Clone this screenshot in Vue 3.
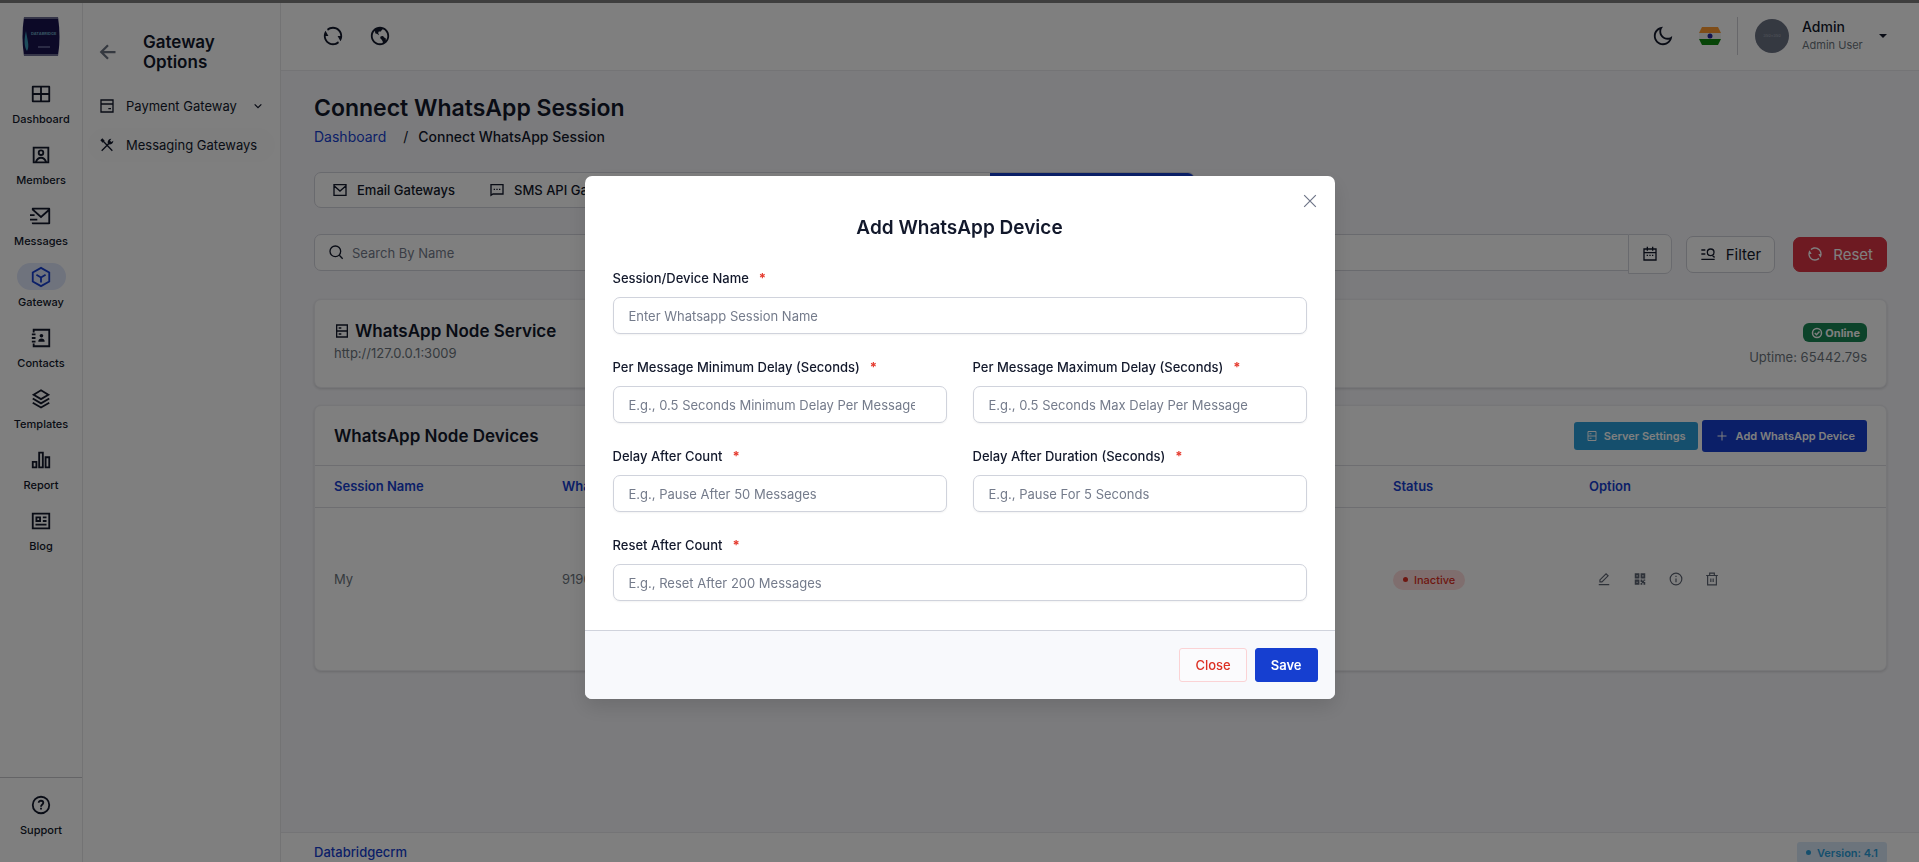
<template>
    <div class="app">
        <!-- Shared icon shapes -->
        <svg class="sprite" aria-hidden="true">
            <symbol id="i-grid" viewBox="0 0 24 24"><path d="M21 3C21.6 3 22 3.4 22 4V20C22 20.6 21.6 21 21 21H3C2.4 21 2 20.6 2 20V4C2 3.4 2.4 3 3 3H21ZM11 13H4V19H11V13ZM20 13H13V19H20V13ZM11 5H4V11H11V5ZM20 5H13V11H20V5Z" /></symbol>
            <symbol id="i-user-box" viewBox="0 0 24 24"><path class="line" d="M4 4H20V20H4ZM6.5 19.500C7.500 16.500 9.500 15 12 15S16.500 16.500 17.500 19.500" /><circle class="line" cx="12" cy="9.500" r="2.500" /></symbol>
            <symbol id="i-mail-send" viewBox="0 0 24 24"><path d="M22 20C22 20.600 21.500 21 21 21H3C2.400 21 2 20.600 2 20V19H20V7.300L12 14.500L2 5.500V4C2 3.400 2.500 3 3 3H21C21.600 3 22 3.400 22 4V20ZM4.400 5L12 11.800L19.600 5H4.400ZM0 15H8V17H0V15ZM0 10H5V12H0V10Z" /></symbol>
            <symbol id="i-box" viewBox="0 0 24 24"><path class="line" d="M12 2L21 7V17L12 22L3 17V7ZM7 9.500L12 12.500L17 9.500M12 12.500V18" /></symbol>
            <symbol id="i-contacts" viewBox="0 0 24 24"><path class="line" d="M4 6V3H21V21H4V18M2 8H6M2 12H6M2 16H6" /><circle cx="12.500" cy="9.500" r="2" /><path d="M9 16C9 13.500 10.500 12.500 12.500 12.500S16 13.500 16 16Z" /></symbol>
            <symbol id="i-stack" viewBox="0 0 24 24"><path class="line" d="M12 2.500L20 7.300L12 12.100L4 7.300ZM3 11.500L12 16.800L21 11.500M3 16L12 21.300L21 16" /></symbol>
            <symbol id="i-chart" viewBox="0 0 24 24"><path d="M2 13H8V21H2V13ZM4 15V19H6V15H4ZM9 3H15V21H9V3ZM11 5V19H13V5H11ZM16 8H22V21H16V8ZM18 10V19H20V10H18Z" /></symbol>
            <symbol id="i-article" viewBox="0 0 24 24"><path class="line" d="M3 4H21V20H3ZM7 8H11V12H7ZM14 8H18M14 12H18M6 16H18" /></symbol>
            <symbol id="i-question" viewBox="0 0 24 24"><circle class="line" cx="12" cy="12" r="9" /><path class="line" d="M9.500 9.500C9.500 6.500 14.500 6.800 14.500 9.600C14.500 11.500 12 11.500 12 14" /><path d="M11 15H13V17H11Z" /></symbol>
            <symbol id="i-refresh" viewBox="0 0 24 24"><path d="M5.46 4.43C7.22 2.92 9.5 2 12 2C17.52 2 22 6.48 22 12C22 14.14 21.33 16.12 20.19 17.74L17 12H20C20 7.58 16.42 4 12 4C9.85 4 7.9 4.85 6.46 6.23L5.46 4.43ZM18.54 19.57C16.78 21.08 14.5 22 12 22C6.48 22 2 17.52 2 12C2 9.88 2.67 7.88 3.81 6.26L7 12H4C4 16.42 7.58 20 12 20C14.15 20 16.1 19.15 17.54 17.77L18.54 19.57Z" /></symbol>
            <symbol id="i-earth" viewBox="0 0 24 24"><path d="M6.24 6.45C4.85 7.89 4 9.85 4 12C4 16.42 7.58 20 12 20C13.08 20 14.11 19.79 15.05 19.4C15.17 18.65 14.91 17.93 14.81 17.67C14.58 17.12 13.82 16.16 12.56 14.83C12.22 14.48 12.24 14.2 12.36 13.39C12.46 12.75 12.6 12.42 14.46 12.12C15.41 11.97 15.66 12.35 16 12.88L16.12 13.05C16.45 13.53 16.69 13.64 17.06 13.81C17.22 13.88 17.43 13.98 17.7 14.13C18.36 14.5 18.36 14.92 18.36 15.85C18.36 16.34 18.32 16.69 18.26 16.99C19.35 15.62 20 13.89 20 12C20 8.7 18 5.87 15.15 4.64C14.6 5.02 13.84 5.55 13.58 5.91C13.44 6.1 13.25 7.04 12.63 7.12C12.46 7.14 12.24 7.13 12.01 7.11C11.39 7.07 10.54 7.02 10.27 7.75C10.1 8.22 10.06 9.49 10.62 10.15C10.71 10.26 10.73 10.45 10.67 10.67C10.59 10.96 10.43 11.14 10.38 11.17C10.28 11.12 10.09 10.89 9.96 10.74C9.65 10.38 9.25 9.92 8.75 9.78C8.56 9.73 8.36 9.69 8.17 9.65C7.62 9.53 6.99 9.4 6.85 9.09C6.74 8.87 6.74 8.56 6.75 8.23C6.75 7.81 6.75 7.34 6.54 6.88C6.46 6.71 6.36 6.56 6.24 6.45ZM12 22C6.48 22 2 17.52 2 12C2 6.48 6.48 2 12 2C17.52 2 22 6.48 22 12C22 17.52 17.52 22 12 22Z" /></symbol>
            <symbol id="i-moon" viewBox="0 0 24 24"><path d="M10 7C10 10.87 13.13 14 17 14C18.96 14 20.73 13.2 22 11.9V12C22 17.52 17.52 22 12 22C6.48 22 2 17.52 2 12C2 6.48 6.48 2 12 2H12.1C10.8 3.27 10 5.04 10 7ZM4 12C4 16.42 7.58 20 12 20C15.06 20 17.72 18.28 19.06 15.76C18.39 15.92 17.7 16 17 16C12.03 16 8 11.97 8 7C8 6.3 8.08 5.61 8.24 4.94C5.72 6.28 4 8.94 4 12Z" /></symbol>
            <symbol id="i-arrow-left" viewBox="0 0 24 24"><path class="line bold" d="M22 12H3M12 3L3 12L12 21" /></symbol>
            <symbol id="i-card" viewBox="0 0 24 24"><path class="line" d="M3 3H21V21H3ZM3 9H21M14 16H18" /></symbol>
            <symbol id="i-tools" viewBox="0 0 24 24"><path class="line" d="M5 5L20 20.500M4 20.500L14.500 10" /><path d="M2 5L5 2L8.500 5.500L5.500 8.500ZM13 9.500C12.500 5.500 15 2.500 18.500 2.500L16.500 5.500L18.500 7.500L21.500 5.500C21.500 9 18.500 11.500 14.500 11Z" /></symbol>
            <symbol id="i-chevron" viewBox="0 0 24 24"><path class="line bold" d="M4 8L12 16L20 8" /></symbol>
            <symbol id="i-mail" viewBox="0 0 24 24"><path class="line" d="M3 4H21V20H3ZM3 5.500L12 13.500L21 5.500" /></symbol>
            <symbol id="i-chat" viewBox="0 0 24 24"><path class="line" d="M3 20V4H21V18H6Z" /><path d="M7 10H9V12H7ZM11 10H13V12H11ZM15 10H17V12H15Z" /></symbol>
            <symbol id="i-search" viewBox="0 0 24 24"><circle class="line" cx="11" cy="11" r="8" /><path class="line" d="M17 17L22 22" /></symbol>
            <symbol id="i-calendar" viewBox="0 0 24 24"><path class="line" d="M3 4.500H21V21H3ZM3 10H21M8 1V7M16 1V7" /><path d="M7 13H9V15H7ZM11 13H13V15H11ZM15 13H17V15H15Z" /></symbol>
            <symbol id="i-filter" viewBox="0 0 24 24"><path class="line" d="M2 6H8M2 12H8M2 20H22M19 15L22 17" /><circle class="line" cx="16" cy="9.500" r="5" /></symbol>
            <symbol id="i-server" viewBox="0 0 24 24"><path class="line" d="M4 3H20V21H4ZM4 12H20M7 7.500H11M7 16.500H11" /></symbol>
            <symbol id="i-check" viewBox="0 0 24 24"><circle class="line bold" cx="12" cy="12" r="9" /><path class="line bold" d="M7.500 12L11 15.500L17 9" /></symbol>
            <symbol id="i-plus" viewBox="0 0 24 24"><path class="line" d="M12 3V21M3 12H21" /></symbol>
            <symbol id="i-pen" viewBox="0 0 24 24"><path class="line" d="M3 21.500H21M5 17V13.500L15.500 3L19 6.500L8.500 17Z" /></symbol>
            <symbol id="i-qr" viewBox="0 0 24 24"><path fill-rule="evenodd" d="M3 2H11V11H3ZM6 5.500V7.500H8V5.500ZM13 2H21V11H13ZM16 5.500V7.500H18V5.500ZM3 13H11V22H3ZM6 16.500V18.500H8V16.500ZM13 13H16V15H18V13H21V15H19V17H21V22H18V19H16V22H13V19H15V17H13Z" /></symbol>
            <symbol id="i-info" viewBox="0 0 24 24"><circle class="line" cx="12" cy="12" r="10" /><path class="line" d="M12 11V17.500M12 6.500V8.500" /></symbol>
            <symbol id="i-trash" viewBox="0 0 24 24"><path class="line" d="M2 6H22M4.500 6V22H19.500V6M8 5V2H16V5M10 11V17M14 11V17" /></symbol>
            <symbol id="i-close" viewBox="0 0 24 24"><path class="line" d="M2 2L22 22M22 2L2 22" /></symbol>
        </svg>

        <!-- Main icon sidebar -->
        <aside class="rail">
            <a class="rail__logo" href="#" aria-label="Home">
                <svg width="40" height="40" viewBox="0 0 40 40">
                    <path d="M3 0H37Q40 20 37 39H3Q0 20 3 0Z" fill="#18134e" />
                    <path d="M3 1H37M3 38H37" stroke="#6a6a90" stroke-width="2" />
                    <path d="M5 14C3 22 3 30 6 34C9 29 6 22 5 14Z" fill="#3d9ab8" />
                    <text x="10" y="18" class="rail__logo-text">DATABRIDGE</text>
                    <path d="M17 30H29" stroke="#56568a" stroke-width="2" />
                </svg>
            </a>
            <nav class="rail__nav">
                <a v-for="item in railItems" :key="item.label" href="#" class="rail__item" :class="{ 'rail__item--active': item.active }">
                    <span class="rail__icon"><svg class="icon icon--22"><use :href="item.icon" /></svg></span>
                    {{ item.label }}
                </a>
            </nav>
            <div class="rail__bottom">
                <a href="#" class="rail__item">
                    <span class="rail__icon"><svg class="icon icon--22"><use href="#i-question" /></svg></span>
                    Support
                </a>
            </div>
        </aside>

        <!-- Gateway sub menu -->
        <aside class="submenu">
            <div class="submenu__head">
                <button type="button" class="plain submenu__back" aria-label="Back"><svg class="icon icon--18"><use href="#i-arrow-left" /></svg></button>
                <h2>Gateway Options</h2>
            </div>
            <a href="#" class="submenu__link">
                <svg class="icon icon--16"><use href="#i-card" /></svg>
                Payment Gateway
                <svg class="icon icon--10 submenu__chevron"><use href="#i-chevron" /></svg>
            </a>
            <a href="#" class="submenu__link submenu__link--active">
                <svg class="icon icon--16"><use href="#i-tools" /></svg>
                Messaging Gateways
            </a>
        </aside>

        <div class="page">
            <header class="topbar">
                <div class="topbar__left">
                    <button type="button" class="plain" aria-label="Refresh"><svg class="icon icon--22"><use href="#i-refresh" /></svg></button>
                    <button type="button" class="plain" aria-label="Website"><svg class="icon icon--22"><use href="#i-earth" /></svg></button>
                </div>
                <div class="topbar__right">
                    <button type="button" class="plain" aria-label="Theme"><svg class="icon icon--22"><use href="#i-moon" /></svg></button>
                    <button type="button" class="plain topbar__flag" aria-label="Language">
                        <svg width="22" height="18" viewBox="0 0 22 18">
                            <path d="M3 0H19L22 6H0Z" fill="#ff9b30" />
                            <path d="M0 6H22V12H0Z" fill="#f2f2f2" />
                            <path d="M0 12H22L19 18H3Z" fill="#0f8a0f" />
                            <circle cx="11" cy="9" r="2.500" fill="#25259c" />
                        </svg>
                    </button>
                    <button type="button" class="plain profile">
                        <span class="profile__avatar">350x350</span>
                        <span class="profile__text">
                            <span class="profile__name">Admin</span>
                            <span class="profile__role">Admin User</span>
                        </span>
                        <span class="profile__caret"></span>
                    </button>
                </div>
            </header>

            <main class="content">
                <h1>Connect WhatsApp Session</h1>
                <nav class="crumbs">
                    <a href="#">Dashboard</a>
                    <span class="crumbs__sep">/</span>
                    <span>Connect WhatsApp Session</span>
                </nav>

                <nav class="tabs">
                    <a v-for="tab in tabs" :key="tab.label" href="#" class="tabs__item" :class="{ 'tabs__item--active': tab.active }">
                        <svg class="icon icon--16"><use :href="tab.icon" /></svg>
                        {{ tab.label }}
                    </a>
                </nav>

                <!-- Table filters -->
                <form class="filters" @submit.prevent>
                    <div class="filters__fields">
                        <div class="filters__search">
                            <svg class="icon icon--16"><use href="#i-search" /></svg>
                            <input v-model="search" type="text" placeholder="Search By Name" aria-label="Search by name" />
                        </div>
                        <select v-model="status" aria-label="Status">
                            <option value="">Select A Status</option>
                            <option value="active">Active</option>
                            <option value="inactive">Inactive</option>
                        </select>
                        <div class="filters__date">
                            <input v-model="date" type="text" placeholder="Filter By Date" aria-label="Filter by date" />
                            <button type="button" aria-label="Open calendar"><svg class="icon icon--16"><use href="#i-calendar" /></svg></button>
                        </div>
                    </div>
                    <button type="submit" class="filters__btn filters__btn--filter"><svg class="icon icon--16"><use href="#i-filter" /></svg>Filter</button>
                    <button type="reset" class="filters__btn filters__btn--reset"><svg class="icon icon--16"><use href="#i-refresh" /></svg>Reset</button>
                </form>

                <section class="card service">
                    <div>
                        <h3><svg class="icon icon--16"><use href="#i-server" /></svg>WhatsApp Node Service</h3>
                        <p>http://127.0.0.1:3009</p>
                    </div>
                    <div class="service__state">
                        <span class="online"><svg class="icon icon--12"><use href="#i-check" /></svg>Online</span>
                        <p>Uptime: 65442.79s</p>
                    </div>
                </section>

                <section class="card devices">
                    <div class="devices__head">
                        <h3>WhatsApp Node Devices</h3>
                        <div class="devices__actions">
                            <button type="button" class="btn-server"><svg class="icon icon--12"><use href="#i-server" /></svg>Server Settings</button>
                            <button type="button" class="btn-add" @click="showModal = true"><svg class="icon icon--12"><use href="#i-plus" /></svg>Add WhatsApp Device</button>
                        </div>
                    </div>
                    <table>
                        <thead>
                            <tr>
                                <th class="col-name">Session Name</th>
                                <th>WhatsApp Number</th>
                                <th class="col-status">Status</th>
                                <th class="col-option">Option</th>
                            </tr>
                        </thead>
                        <tbody>
                            <tr v-for="device in devices" :key="device.name">
                                <td>{{ device.name }}</td>
                                <td>{{ device.number }}</td>
                                <td><span class="inactive"><i></i>{{ device.status }}</span></td>
                                <td>
                                    <div class="row-actions">
                                        <button v-for="action in rowActions" :key="action.label" type="button" class="plain" :aria-label="action.label">
                                            <svg class="icon icon--14"><use :href="action.icon" /></svg>
                                        </button>
                                    </div>
                                </td>
                            </tr>
                        </tbody>
                    </table>
                </section>
            </main>

            <footer class="footer">
                <a href="#">Databridgecrm</a>
                <span class="version"><i></i>Version: 4.1</span>
            </footer>
        </div>

        <!-- Add device dialog -->
        <div v-if="showModal" class="overlay">
            <form class="modal" role="dialog" aria-labelledby="modal-title" @submit.prevent="showModal = false">
                <button type="button" class="plain modal__x" aria-label="Dismiss" @click="showModal = false"><svg class="icon icon--14"><use href="#i-close" /></svg></button>
                <h2 id="modal-title">Add WhatsApp Device</h2>
                <div class="modal__body">
                    <div v-for="field in fields" :key="field.id" class="field" :class="{ 'field--wide': field.wide }">
                        <label :for="field.id">{{ field.label }}<span>*</span></label>
                        <input :id="field.id" v-model="form[field.id]" type="text" :placeholder="field.placeholder" />
                    </div>
                </div>
                <div class="modal__footer">
                    <button type="button" class="btn-close" @click="showModal = false">Close</button>
                    <button type="submit" class="btn-save">Save</button>
                </div>
            </form>
        </div>
    </div>
</template>

<script setup>
import { ref, reactive } from 'vue';

const showModal = ref(true);
const search = ref('');
const status = ref('');
const date = ref('');

const railItems = [
    { label: 'Dashboard', icon: '#i-grid' },
    { label: 'Members', icon: '#i-user-box' },
    { label: 'Messages', icon: '#i-mail-send' },
    { label: 'Gateway', icon: '#i-box', active: true },
    { label: 'Contacts', icon: '#i-contacts' },
    { label: 'Templates', icon: '#i-stack' },
    { label: 'Report', icon: '#i-chart' },
    { label: 'Blog', icon: '#i-article' },
];

const tabs = [
    { label: 'Email Gateways', icon: '#i-mail' },
    { label: 'SMS API Gateways', icon: '#i-chat' },
    { label: 'Android Gateways', icon: '#i-chat' },
    { label: 'WhatsApp Cloud', icon: '#i-chat' },
    { label: 'WhatsApp Node', icon: '#i-chat', active: true },
];

const devices = [{ name: 'My', number: '919000000000', status: 'Inactive' }];

const rowActions = [
    { label: 'Edit', icon: '#i-pen' },
    { label: 'QR code', icon: '#i-qr' },
    { label: 'Info', icon: '#i-info' },
    { label: 'Delete', icon: '#i-trash' },
];

// Fields of the add device form
const fields = [
    { id: 'name', label: 'Session/Device Name', placeholder: 'Enter Whatsapp Session Name', wide: true },
    { id: 'minDelay', label: 'Per Message Minimum Delay (Seconds)', placeholder: 'E.g., 0.5 Seconds Minimum Delay Per Message' },
    { id: 'maxDelay', label: 'Per Message Maximum Delay (Seconds)', placeholder: 'E.g., 0.5 Seconds Max Delay Per Message' },
    { id: 'afterCount', label: 'Delay After Count', placeholder: 'E.g., Pause After 50 Messages' },
    { id: 'afterDuration', label: 'Delay After Duration (Seconds)', placeholder: 'E.g., Pause For 5 Seconds' },
    { id: 'resetCount', label: 'Reset After Count', placeholder: 'E.g., Reset After 200 Messages', wide: true },
];

const form = reactive({ name: '', minDelay: '', maxDelay: '', afterCount: '', afterDuration: '', resetCount: '' });
</script>

<style>
body {
    margin: 0;
    overflow: hidden;
}
</style>

<style scoped>
* {
    box-sizing: border-box;
}

.app {
    display: flex;
    height: 100vh;
    overflow: hidden;
    border-top: 3px solid #7c7c7c;
    background-color: #f7f7fb;
    color: #12182b;
    font-family: Inter, "Liberation Sans", sans-serif;
    font-size: 14px;
    line-height: 20px;
}

a {
    color: inherit;
    text-decoration: none;
}

h1, h2, h3, p {
    margin: 0;
}

button, input, select {
    font-family: inherit;
    color: inherit;
}

button {
    cursor: pointer;
}

.plain {
    display: flex;
    align-items: center;
    padding: 0;
    border: 0;
    background: none;
}

.sprite {
    position: absolute;
    width: 0;
    height: 0;
}

.line {
    fill: none;
    stroke: currentColor;
    stroke-width: 2;
}

.bold {
    stroke-width: 3;
}

.icon {
    flex: none;
    fill: currentColor;
}

.icon--10 { width: 10px; height: 10px; }
.icon--12 { width: 12px; height: 12px; }
.icon--14 { width: 14px; height: 14px; }
.icon--16 { width: 16px; height: 16px; }
.icon--18 { width: 18px; height: 18px; }
.icon--22 { width: 22px; height: 22px; }

/* Icon sidebar */
.rail {
    display: flex;
    flex-direction: column;
    flex: none;
    width: 83px;
    border-right: 1px solid #e6e6e9;
    background-color: #fff;
}

.rail__logo {
    align-self: center;
    height: 40px;
    margin: 14px 0 23px;
}

.rail__logo-text {
    fill: #6fa6c4;
    font-size: 4px;
    font-weight: 700;
}

.rail__nav {
    display: flex;
    flex-direction: column;
    gap: 14px;
}

.rail__item {
    display: flex;
    flex-direction: column;
    align-items: center;
    gap: 4px;
    font-size: 11px;
    font-weight: 500;
    line-height: 16px;
}

.rail__icon {
    display: flex;
    align-items: center;
    justify-content: center;
    width: 49px;
    height: 27px;
    border-radius: 14px;
}

.rail__item--active .rail__icon {
    background-color: #dfe6fa;
    color: #163fd0;
}

.rail__bottom {
    height: 85px;
    margin-top: auto;
    padding-top: 13px;
    border-top: 1px solid #c9c9cc;
}

/* Sub menu */
.submenu {
    flex: none;
    width: 198px;
    padding: 29px 5px;
    border-right: 1px solid #e6e6e9;
    background-color: #fff;
}

.submenu__head {
    display: flex;
    align-items: center;
    gap: 26px;
    margin-bottom: 17px;
    padding-left: 11px;
}

.submenu__back {
    color: #6b7280;
}

.submenu__head h2 {
    font-size: 17px;
    font-weight: 600;
    line-height: 20px;
}

.submenu__link {
    display: flex;
    align-items: center;
    gap: 11px;
    height: 34px;
    margin-bottom: 5px;
    padding: 0 12px 0 11px;
    border-radius: 17px;
    font-size: 13px;
}

.submenu__link--active {
    background-color: #fcfcfd;
}

.submenu__chevron {
    margin-left: auto;
}

/* Top bar */
.page {
    display: flex;
    flex: 1;
    flex-direction: column;
    min-width: 0;
}

.topbar {
    display: flex;
    flex: none;
    align-items: center;
    justify-content: space-between;
    height: 68px;
    padding: 0 32px 2px 41px;
    border-bottom: 1px solid #e8e8ec;
    background-color: #fff;
}

.topbar__left {
    display: flex;
    gap: 25px;
}

.topbar__right {
    display: flex;
    align-items: center;
}

.topbar__flag {
    margin: 0 16px 0 25px;
}

.profile {
    height: 38px;
    padding-left: 17px;
    border-left: 1px solid #cfcfd4;
    text-align: left;
}

.profile__avatar {
    width: 34px;
    height: 34px;
    margin-right: 13px;
    border-radius: 50%;
    background-color: #6b7283;
    color: #a4a9b5;
    font-size: 4px;
    line-height: 34px;
    text-align: center;
}

.profile__text {
    display: flex;
    flex-direction: column;
    width: 77px;
}

.profile__name {
    font-size: 14px;
    font-weight: 500;
    line-height: 18px;
}

.profile__role {
    color: #6c757d;
    font-size: 11px;
    line-height: 18px;
}

.profile__caret {
    border: 4px solid transparent;
    border-top-color: currentColor;
    border-bottom: 0;
}

/* Content */
.content {
    flex: 1;
    min-height: 0;
    padding: 21px 32px 0 33px;
}

h1 {
    font-size: 23px;
    font-weight: 600;
    line-height: 32px;
}

.crumbs {
    display: flex;
    margin: 3px 0 25px;
    font-size: 14px;
    font-weight: 500;
}

.crumbs a {
    color: #163fd0;
    font-weight: 400;
}

.crumbs__sep {
    margin: 0 10px 0 17px;
    font-weight: 400;
}

.tabs {
    display: flex;
    width: 56%;
    height: 36px;
    overflow: hidden;
    border: 1px solid #d3d4dc;
    border-radius: 7px;
    background-color: #fff;
}

.tabs__item {
    display: flex;
    flex: none;
    align-items: center;
    gap: 9px;
    padding: 0 17px;
    font-size: 13px;
    font-weight: 500;
}

.tabs__item--active {
    flex: 0 0 204px;
    margin-left: auto;
    background-color: #163fd0;
    color: #fff;
}

.filters {
    display: flex;
    align-items: center;
    margin: 26px 0 25px;
}

.filters__fields {
    display: grid;
    flex: 1;
    grid-template-columns: repeat(3, 1fr);
    gap: 24px;
    align-items: start;
}

.filters input,
.filters select {
    width: 100%;
    height: 37px;
    padding: 0 15px;
    border: 1px solid #d3d4dc;
    border-radius: 7px;
    background-color: #fff;
    font-size: 13px;
}

.filters__search {
    position: relative;
}

.filters__search .icon {
    position: absolute;
    top: 10px;
    left: 14px;
}

.filters .filters__search input {
    padding-left: 37px;
}

.filters__date {
    display: flex;
    align-items: flex-start;
}

.filters .filters__date input {
    border-right: 0;
    border-radius: 7px 0 0 7px;
}

.filters__date button {
    display: flex;
    flex: none;
    align-items: center;
    justify-content: center;
    width: 44px;
    height: 40px;
    border: 1px solid #d3d4dc;
    border-radius: 0 7px 7px 0;
    background-color: #fff;
}

.filters__btn {
    display: flex;
    align-items: center;
    gap: 10px;
    height: 37px;
    padding: 0 13px;
    border: 1px solid #cfd0d8;
    border-radius: 7px;
    background-color: #fff;
    font-size: 15px;
}

.filters__btn--filter {
    margin: 0 18px 0 14px;
}

.filters__btn--reset {
    height: 35px;
    border-color: #dc3545;
    background-color: #dc3545;
    color: #fff;
}

input::placeholder {
    color: #747b8b;
    opacity: 1;
}

.card {
    margin-bottom: 17px;
    border: 1px solid #ececf1;
    border-radius: 7px;
    background-color: #fff;
    box-shadow: 0 1px 3px rgba(0, 0, 0, 0.15);
}

h3 {
    display: flex;
    align-items: center;
    gap: 5px;
    font-size: 17px;
    font-weight: 600;
    line-height: 24px;
}

.service {
    display: flex;
    justify-content: space-between;
    height: 89px;
    padding: 19px;
}

.service p {
    color: #6c757d;
    font-size: 13px;
}

.service__state {
    display: flex;
    flex-direction: column;
    align-items: flex-end;
    gap: 5px;
    padding-top: 4px;
}

.online {
    display: flex;
    align-items: center;
    gap: 2px;
    height: 19px;
    padding: 0 7px 0 8px;
    border-radius: 6px;
    background-color: #198754;
    color: #fff;
    font-size: 11px;
    font-weight: 700;
}

.devices {
    padding-bottom: 19px;
}

.devices__head {
    display: flex;
    align-items: center;
    justify-content: space-between;
    height: 60px;
    padding: 0 19px;
    border-bottom: 1px solid #dcdde3;
}

.devices__actions {
    display: flex;
    align-items: center;
    gap: 4px;
}

.devices__actions button {
    display: flex;
    align-items: center;
    border: 0;
    border-radius: 3px;
    color: #fff;
    font-weight: 600;
    font-size: 11px;
}

.btn-server {
    gap: 6px;
    height: 28px;
    padding: 0 12px;
    background-color: #2b9fdb;
}

.btn-add {
    gap: 8px;
    height: 32px;
    padding: 0 12px 0 14px;
    background-color: #163fd0;
}

table {
    width: 100%;
    border-collapse: collapse;
    table-layout: fixed;
}

th {
    height: 41px;
    padding: 0 19px;
    border-bottom: 1px solid #dcdde3;
    color: #163fd0;
    font-size: 13px;
    font-weight: 600;
    text-align: left;
}

td {
    height: 144px;
    padding: 0 19px;
    color: #6c757d;
    font-size: 13px;
}

td .icon {
    color: #5d6472;
}

.col-name {
    width: 228px;
}

.col-status {
    width: 196px;
}

.col-option {
    width: 316px;
}

.inactive {
    display: inline-flex;
    align-items: center;
    gap: 6px;
    height: 20px;
    padding: 0 10px;
    border-radius: 10px;
    background-color: #ffdcdc;
    color: #dc2f22;
    font-size: 11px;
    font-weight: 500;
    vertical-align: middle;
}

.inactive i,
.version i {
    width: 5px;
    height: 5px;
    border-radius: 50%;
    background-color: currentColor;
}

.row-actions {
    display: flex;
    gap: 22px;
    padding-left: 8px;
}

.footer {
    display: flex;
    flex: none;
    align-items: flex-start;
    justify-content: space-between;
    height: 30px;
    padding: 9px 32px 0 33px;
    border-top: 1px solid #e8e8ec;
    background-color: #fff;
}

.footer a {
    color: #163fd0;
    font-size: 13px;
    font-weight: 500;
}

.version {
    display: flex;
    align-items: center;
    gap: 6px;
    height: 21px;
    padding: 0 9px;
    border-radius: 3px;
    background-color: #d9e9f9;
    color: #2b9fdb;
    font-size: 11px;
    font-weight: 600;
}

/* Dialog */
.overlay {
    position: fixed;
    inset: 0;
    display: flex;
    align-items: flex-start;
    justify-content: center;
    padding-top: 176px;
    background-color: rgba(0, 0, 0, 0.5);
}

.modal {
    position: relative;
    width: 750px;
    border-radius: 7px;
    background-color: #fff;
    box-shadow: 0 8px 20px rgba(0, 0, 0, 0.12);
}

.modal__x {
    position: absolute;
    top: 18px;
    right: 18px;
    color: #6d7487;
}

.modal h2 {
    padding-top: 39px;
    font-size: 19px;
    font-weight: 600;
    line-height: 26px;
    text-align: center;
}

.modal__body {
    display: grid;
    grid-template-columns: 1fr 1fr;
    gap: 23px 26px;
    padding: 27px 28px 29px;
}

.field--wide {
    grid-column: span 2;
}

.field label {
    display: block;
    margin-bottom: 8px;
    font-size: 13px;
    font-weight: 500;
    line-height: 21px;
}

.field label span {
    margin-left: 10px;
    color: #e5392d;
    font-weight: 700;
}

.field input {
    display: block;
    width: 100%;
    height: 37px;
    padding: 0 31px 0 15px;
    border: 1px solid #d0d3dc;
    border-radius: 7px;
    background-color: #fff;
    font-size: 13px;
    box-shadow: 0 1px 2px rgba(0, 0, 0, 0.05);
}

.modal__footer {
    display: flex;
    justify-content: flex-end;
    gap: 8px;
    padding: 17px;
    border-top: 1px solid #d0d3dc;
    border-radius: 0 0 7px 7px;
    background-color: #f8f9fc;
}

.modal__footer button {
    height: 34px;
    padding: 0 15px;
    border: 1px solid #fbd3d5;
    border-radius: 3px;
    font-size: 13px;
    font-weight: 500;
}

.btn-close {
    background-color: #fbfbfd;
    color: #dc2f22;
}

.modal__footer .btn-save {
    border-color: #163fd0;
    background-color: #163fd0;
    color: #fff;
    font-weight: 600;
}
</style>
